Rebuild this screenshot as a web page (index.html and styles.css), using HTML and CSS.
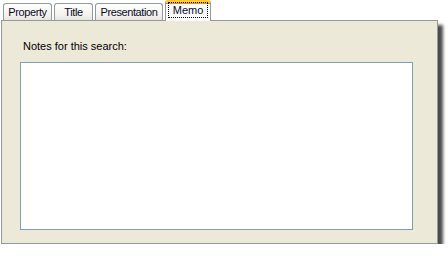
FILE: index.html
```html
<!DOCTYPE html>
<html>
<head>
	<meta charset="UTF-8">
	<link rel="stylesheet" href="styles.css">
</head>
<body>
 <div class="window">
	 <div class="tabs">
		 <div class="tab tab-property">Property</div>
		 <div class="tab tab-title">Title</div>
		 <div class="tab tab-presentation">Presentation</div>
		 <div class="tab tab-memo active"><span class="focus">Memo</span></div>
	 </div>
	 <div class="panel">
		 <div class="label">Notes for this search:</div>
		 <textarea class="memo"></textarea>
	 </div>
 </div>
</body>
</html>
```

FILE: styles.css
```css
* {
	margin: 0;
	padding: 0;
	box-sizing: border-box;
}
body {
	background: #fff;
	font: 11px "Liberation Sans", Arial, sans-serif;
	color: #000;
}
.window {
	width: 438px;
	padding-left: 1px;
}
.tabs {
	display: flex;
	align-items: flex-end;
	gap: 2px;
	height: 20px;
	padding-left: 2px;
}
.tab {
	height: 17px;
	border: 1px solid #919b9c;
	border-bottom: none;
	border-radius: 3px 3px 0 0;
	background: linear-gradient(#fefefe, #f3f2ec 70%, #e6e5de);
	color: #0a0a28;
	text-align: center;
	line-height: 17px;
	letter-spacing: -0.4px;
}
.tab-property {
	width: 49px;
}
.tab-title {
	width: 39px;
}
.tab-presentation {
	width: 68px;
}
.tab-memo {
	width: 46px;
}
.tab.active {
	height: 21px;
	margin-bottom: -1px;
	position: relative;
	z-index: 1;
	background: #fcfcfe;
	border-top: 3px solid #ffc83c;
	box-shadow: inset 0 1px 0 #e68b2c;
	padding: 0 2px;
	letter-spacing: 0;
}
.focus {
	display: block;
	height: 16px;
	margin-top: -1px;
	line-height: 14px;
	border: 1px dotted #000;
}
.panel {
	width: 437px;
	height: 224px;
	border: 1px solid #919b9c;
	background: #ece9d8;
	padding: 19px 0 0 18px;
	box-shadow: 5px 5px 3px rgba(0, 0, 0, 0.7);
}
.label {
	padding-left: 3px;
	line-height: 13px;
}
.memo {
	display: block;
	width: 393px;
	height: 168px;
	margin-top: 9px;
	border: 1px solid #7f9db9;
	background: #fff;
	resize: none;
	outline: none;
}
```
